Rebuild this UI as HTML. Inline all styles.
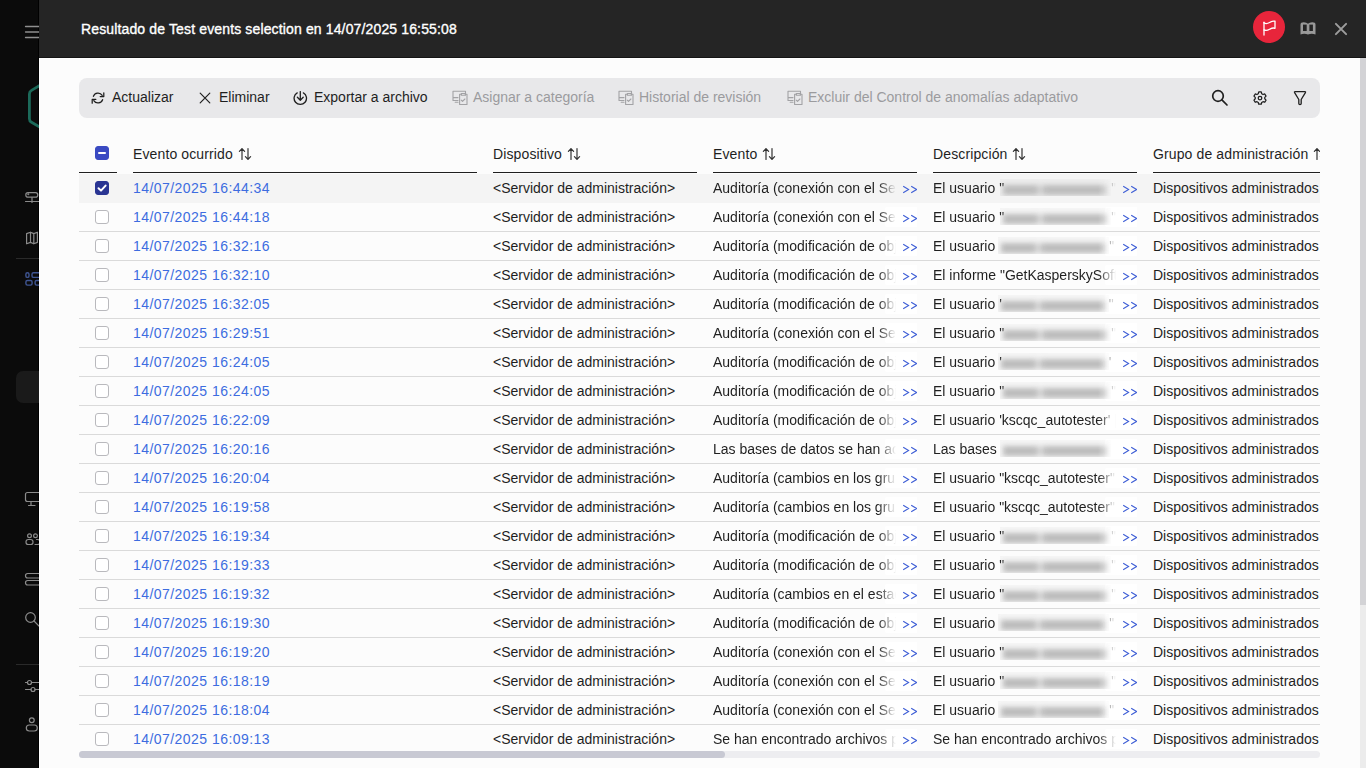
<!DOCTYPE html>
<html><head><meta charset="utf-8"><title>Resultado</title>
<style>
*{margin:0;padding:0;box-sizing:border-box}
html,body{width:1366px;height:768px;overflow:hidden;background:#0c0c0c;font-family:"Liberation Sans",sans-serif;font-size:14px;color:#1f1f1f}
.abs{position:absolute}
#side{position:absolute;left:0;top:0;width:39px;height:768px;background:#0b0b0b;border-right:1px solid #000}
#modal{position:absolute;left:39px;top:58px;width:1327px;height:710px;background:#fcfcfc;border-left:1px solid #fff;border-top:1px solid #fff}
#hdr{position:absolute;left:39px;top:0;width:1327px;height:58px;background:#252525;border-bottom:1px solid #151515}
#title{position:absolute;left:81px;top:20px;font-size:14px;font-weight:normal;color:#fff;letter-spacing:0.14px;-webkit-text-stroke:0.35px #fff;white-space:nowrap;line-height:18px}
#flag{position:absolute;left:1253px;top:11px;width:32px;height:32px;border-radius:50%;background:#e8253b}
#tb{position:absolute;left:79px;top:78px;width:1241px;height:40px;border-radius:8px;background:#e8e8ea}
.tbt{position:absolute;top:88px;line-height:18px;white-space:nowrap;color:#1f1f1f}
.dis{color:#9b9b9e}
.th{position:absolute;top:145px;height:20px;line-height:18px;white-space:nowrap;overflow:hidden;color:#1f1f1f;letter-spacing:0.12px}
.sort{display:inline-block;vertical-align:top;margin-left:5px;margin-top:2px}
.cb.hdr{position:absolute;background:#3a4ac2;border-color:#3a4ac2}
.minus{position:absolute;left:2px;top:5px;width:8px;height:2px;background:#fff;border-radius:1px}
.ul{position:absolute;top:172px;height:1px;background:#1f1f1f}
#vs{position:absolute;left:1360px;top:58px;width:6px;height:710px;background:#ececec}
#vsth{position:absolute;left:1360px;top:58px;width:6px;height:547px;background:#d3d3d6;border-radius:0}
#hs{position:absolute;z-index:5;left:79px;top:751px;width:1241px;height:7px;background:#ededf0;border-radius:3.5px}
#hsth{position:absolute;z-index:6;left:79px;top:751px;width:646px;height:7px;background:#c8c9d3;border-radius:3.5px}
#rows{position:absolute;left:0;top:0}
.row{position:absolute;left:79px;width:1241px;height:29px;border-bottom:1px solid #dadada;background:transparent}
.row.sel{background:#f4f4f4;border-bottom-color:#f4f4f4}
.row>div{position:absolute;top:0;height:28px;line-height:18px;padding-top:5px;white-space:nowrap;overflow:hidden}
.c0{left:0;width:38px}
.c1{left:54px;width:344px}
.c2{left:414px;width:204px}
.c3{left:634px;width:204px}
.c4{left:854px;width:204px}
.c5{left:1074px;width:167px}
.cb{position:absolute;left:16px;top:7px;width:14px;height:14px;border:1px solid #b9b9bd;border-radius:3px;background:#fff}
.cb.on{background:#2a3593;border-color:#2a3593}
.cb.on svg{position:absolute;left:-1px;top:-1px}
.link{color:#3d6ce0;letter-spacing:0.45px}
.txt{display:block;position:absolute;left:0;top:5px;width:183px;overflow:hidden;-webkit-mask-image:linear-gradient(to right,#000 165px,transparent 183px)}
.more{position:absolute;left:189px;top:11px}
.blur{display:inline-block;width:111px;height:19px;vertical-align:top;margin-top:-2px;margin-left:-4px;position:relative;overflow:hidden;background:rgba(0,0,0,0.03)}
.blur::before{content:"";position:absolute;left:3px;right:3px;top:8px;height:10px;background:linear-gradient(to right,#bcbcbc 0,#bcbcbc 33px,rgba(188,188,188,0.35) 37px,#bcbcbc 42px,#bcbcbc 100%);filter:blur(2.5px)}

.hl{position:absolute;left:172px;top:4px;width:33px;height:20px;background:#fff;border-radius:2px}
.row.sel .hl{display:none}
.blur.ns{margin-left:-1px}

</style></head>
<body>
<div id="side"></div>
<!-- sidebar icons -->
<svg class="abs" style="left:0;top:0" width="39" height="768" viewBox="0 0 39 768">
 <g stroke="#8f8f8f" stroke-width="1.3" fill="none" stroke-linecap="round">
  <path d="M25.5 26.5H40M25.5 32H40M25.5 37.5H40"/>
 </g>
 <path d="M41 84.8 L31.5 90.4 Q29.4 91.6 29.4 94 V118.7 Q29.4 121.1 31.5 122.3 L41 127.9" fill="none" stroke="#1c6a5a" stroke-width="2.8" stroke-linejoin="round"/>
 <g stroke="#8c8c8c" stroke-width="1.2" fill="none" stroke-linecap="round" stroke-linejoin="round">
  <rect x="25.8" y="192.7" width="12" height="4.4" rx="2.2"/><circle cx="28.3" cy="194.3" r="0.4" fill="#8c8c8c"/>
  <path d="M32 197.5V202.5M25.5 201.5H40"/>
  <path d="M26.6 233.6 L30.5 232.2 L33.8 233.6 L37.4 232.2 V242.4 L33.8 243.8 L30.5 242.4 L26.6 243.8Z M30.5 232.2V242.4 M33.8 233.6V243.8"/>
 </g>
 <path d="M16 258.5H39" stroke="#2a2a2a" stroke-width="1"/>
 <g stroke="#3f5592" stroke-width="1.4" fill="none">
  <rect x="25.9" y="272.8" width="3.1" height="4.6" rx="1.5"/>
  <rect x="32" y="272.8" width="8" height="4.6" rx="1.5"/>
  <rect x="25.9" y="280.5" width="6.2" height="4.6" rx="1.5"/>
  <rect x="35.1" y="280.5" width="5" height="4.6" rx="1.5"/>
 </g>
 <rect x="16" y="371" width="30" height="32" rx="7" fill="#1a1a1a"/>
 <g stroke="#8c8c8c" stroke-width="1.2" fill="none" stroke-linecap="round" stroke-linejoin="round">
  <rect x="25.5" y="492.5" width="15" height="9" rx="2"/>
  <path d="M31 502V505.5M28.5 505.5H35"/>
  <circle cx="29.5" cy="535.8" r="1.9"/><circle cx="35.5" cy="535.8" r="1.9"/>
  <rect x="26" y="539.5" width="7" height="5" rx="2.3"/><path d="M36.5 539.5h1a2.3 2.3 0 0 1 2.3 2.3v0.4a2.3 2.3 0 0 1 -2.3 2.3h-2.5"/>
  <rect x="25.5" y="573.5" width="15" height="4.5" rx="2.2"/>
  <rect x="25.5" y="580.5" width="15" height="4.5" rx="2.2"/>
  
  <circle cx="30.5" cy="617.5" r="4.8"/><path d="M34 621 L39 626"/>
 </g>
 <path d="M16 664.5H39" stroke="#2a2a2a" stroke-width="1"/>
 <g stroke="#8c8c8c" stroke-width="1.2" fill="none" stroke-linecap="round">
  <path d="M25.5 682.5H27.5M31.5 682.5H40M25.5 689.5H31M35 689.5H40"/>
  <circle cx="29.5" cy="682.5" r="2"/><circle cx="33" cy="689.5" r="2"/>
  <circle cx="31.8" cy="720.3" r="2.4"/>
  <rect x="26.3" y="725" width="11" height="6" rx="3"/>
 </g>
</svg>
<div id="modal"></div>
<div id="hdr"></div>
<div id="title">Resultado de Test events selection en 14/07/2025 16:55:08</div>
<div id="flag"><svg width="32" height="32" viewBox="0 0 32 32"><g fill="none" stroke="#fff" stroke-width="1.3" stroke-linecap="round" stroke-linejoin="round"><path d="M11 11.2V24"/><path d="M11 11.9Q13.4 13.4 16.6 11.5T22 10.2V17.3M11 18.9Q13.4 20.2 16.6 18.3T22 17.3"/></g></svg></div>
<svg class="abs" style="left:1300px;top:22px" width="16" height="13" viewBox="0 0 16 13">
 <path d="M0.5 12.5V2.6Q0.5 0.3 3.8 0.3Q6.6 0.3 8 1.8Q9.4 0.3 12.2 0.3Q15.5 0.3 15.5 2.6V12.5Q11.8 10.8 8 12.5Q4.2 10.8 0.5 12.5Z" fill="#999"/>
 <rect x="3" y="2.6" width="3.7" height="6.4" fill="#242424"/>
 <rect x="9.4" y="2.6" width="3.5" height="6.4" fill="#242424"/>
</svg>
<svg class="abs" style="left:1334px;top:22px" width="14" height="14" viewBox="0 0 14 14"><path d="M1.9 1.9L12.1 12.1M12.1 1.9L1.9 12.1" stroke="#9d9d9d" stroke-width="2" stroke-linecap="round"/></svg>
<div id="tb"></div>
<svg class="abs" style="left:91px;top:91px" width="14" height="14" viewBox="0 0 14 14"><g fill="none" stroke="#1f1f1f" stroke-width="1.25" stroke-linecap="round" stroke-linejoin="round"><path d="M2.4 5.3A4.9 4.9 0 0 1 11.2 4.4M12.8 1.8V5.6H9.2M11.6 8.7A4.9 4.9 0 0 1 2.8 9.6M1.2 12.2V8.4H4.8"/></g></svg>
<div class="tbt" style="left:112px">Actualizar</div>
<svg class="abs" style="left:199px;top:92px" width="12" height="12" viewBox="0 0 12 12"><path d="M1.2 1.2L10.8 10.8M10.8 1.2L1.2 10.8" stroke="#1f1f1f" stroke-width="1.2" stroke-linecap="round"/></svg>
<div class="tbt" style="left:219px">Eliminar</div>
<svg class="abs" style="left:293px;top:91px" width="15" height="15" viewBox="0 0 15 15"><g fill="none" stroke="#1f1f1f" stroke-width="1.3" stroke-linecap="round" stroke-linejoin="round"><path d="M4.2 1.9A6.2 6.2 0 1 0 10.4 1.9M7.3 0.6V9.1M4.4 6.3L7.3 9.2L10.2 6.3"/></g></svg>
<div class="tbt" style="left:314px">Exportar a archivo</div>
<svg class="abs" style="left:452px;top:90px" width="17" height="16" viewBox="0 0 17 16"><g fill="none" stroke="#a2a2a5" stroke-width="1.1" stroke-linecap="round" stroke-linejoin="round"><path d="M6 10.5H1V1.3H13.5V3.6M1 7.6H6M3.2 12.3H6"/><path d="M9.5 4.3H7.6V14.5H15V4.3H13.2M9.3 3.5H13.5V5.2H9.3Z"/><path d="M9.2 10.1L10.5 11.4L12.9 9"/></g></svg>
<div class="tbt dis" style="left:473px">Asignar a categoría</div>
<svg class="abs" style="left:618px;top:90px" width="17" height="16" viewBox="0 0 17 16"><g fill="none" stroke="#a2a2a5" stroke-width="1.1" stroke-linecap="round" stroke-linejoin="round"><path d="M6 10.5H1V1.3H13.5V3.6M1 7.6H6M3.2 12.3H6"/><path d="M9.5 4.3H7.6V14.5H15V4.3H13.2M9.3 3.5H13.5V5.2H9.3Z"/><path d="M9.2 10.1L10.5 11.4L12.9 9"/></g></svg>
<div class="tbt dis" style="left:639px">Historial de revisión</div>
<svg class="abs" style="left:787px;top:90px" width="17" height="16" viewBox="0 0 17 16"><g fill="none" stroke="#a2a2a5" stroke-width="1.1" stroke-linecap="round" stroke-linejoin="round"><path d="M6 10.5H1V1.3H13.5V3.6M1 7.6H6M3.2 12.3H6"/><path d="M9.5 4.3H7.6V14.5H15V4.3H13.2M9.3 3.5H13.5V5.2H9.3Z"/><path d="M9.2 10.1L10.5 11.4L12.9 9"/></g></svg>
<div class="tbt dis" style="left:808px">Excluir del Control de anomalías adaptativo</div>
<svg class="abs" style="left:1210px;top:89px" width="19" height="18" viewBox="0 0 19 18"><g fill="none" stroke="#1f1f1f" stroke-width="1.7" stroke-linecap="round"><circle cx="8" cy="7" r="5.3"/><path d="M11.9 10.9L17 16"/></g></svg>
<svg class="abs" style="left:1252px;top:90px" width="16" height="16" viewBox="0 0 16 16"><g fill="none" stroke="#1f1f1f" stroke-width="1.4" stroke-linejoin="round" transform="translate(8 8.1) scale(0.9) translate(-8 -8.1)"><path d="M6.6 1.3H9.4L9.9 3.2L11.4 4.1L13.3 3.5L14.7 5.9L13.3 7.3V8.9L14.7 10.3L13.3 12.7L11.4 12.1L9.9 13L9.4 14.9H6.6L6.1 13L4.6 12.1L2.7 12.7L1.3 10.3L2.7 8.9V7.3L1.3 5.9L2.7 3.5L4.6 4.1L6.1 3.2Z"/><circle cx="8" cy="8.1" r="2"/></g></svg>
<svg class="abs" style="left:1292px;top:90px" width="16" height="16" viewBox="0 0 16 16"><g fill="none" stroke="#1f1f1f" stroke-width="1.3" stroke-linejoin="round"><path d="M3.1 1.7H12.9Q13.9 1.7 13.4 2.6L9.2 9.5V13.5Q9.2 14.6 8 14.6Q6.8 14.6 6.8 13.5V9.5L2.6 2.6Q2.1 1.7 3.1 1.7Z"/></g></svg>
<div class="cb hdr" style="left:95px;top:146px"><div class="minus"></div></div>
<div class="th" style="left:133px;width:344px">Evento ocurrido<svg class="sort" width="14" height="14" viewBox="0 0 14 14"><g fill="none" stroke="#333" stroke-width="1.2" stroke-linecap="round" stroke-linejoin="round"><path d="M4 1.6V12.4M1.4 4.4L4 1.6L6.6 4.4M10 1.6V12.4M7.4 9.6L10 12.4L12.6 9.6"/></g></svg></div>
<div class="th" style="left:493px;width:204px">Dispositivo<svg class="sort" width="14" height="14" viewBox="0 0 14 14"><g fill="none" stroke="#333" stroke-width="1.2" stroke-linecap="round" stroke-linejoin="round"><path d="M4 1.6V12.4M1.4 4.4L4 1.6L6.6 4.4M10 1.6V12.4M7.4 9.6L10 12.4L12.6 9.6"/></g></svg></div>
<div class="th" style="left:713px;width:204px">Evento<svg class="sort" width="14" height="14" viewBox="0 0 14 14"><g fill="none" stroke="#333" stroke-width="1.2" stroke-linecap="round" stroke-linejoin="round"><path d="M4 1.6V12.4M1.4 4.4L4 1.6L6.6 4.4M10 1.6V12.4M7.4 9.6L10 12.4L12.6 9.6"/></g></svg></div>
<div class="th" style="left:933px;width:204px">Descripción<svg class="sort" width="14" height="14" viewBox="0 0 14 14"><g fill="none" stroke="#333" stroke-width="1.2" stroke-linecap="round" stroke-linejoin="round"><path d="M4 1.6V12.4M1.4 4.4L4 1.6L6.6 4.4M10 1.6V12.4M7.4 9.6L10 12.4L12.6 9.6"/></g></svg></div>
<div class="th" style="left:1153px;width:167px">Grupo de administración<svg class="sort" width="14" height="14" viewBox="0 0 14 14"><g fill="none" stroke="#333" stroke-width="1.2" stroke-linecap="round" stroke-linejoin="round"><path d="M4 1.6V12.4M1.4 4.4L4 1.6L6.6 4.4M10 1.6V12.4M7.4 9.6L10 12.4L12.6 9.6"/></g></svg></div>
<div class="ul" style="left:79px;width:38px"></div>
<div class="ul" style="left:133px;width:344px"></div>
<div class="ul" style="left:493px;width:204px"></div>
<div class="ul" style="left:713px;width:204px"></div>
<div class="ul" style="left:933px;width:204px"></div>
<div class="ul" style="left:1153px;width:167px"></div>
<div id="vs"></div><div id="vsth"></div>
<div id="hs"></div><div id="hsth"></div>

<div id="rows">
<div class="row sel" style="top:174px">
<div class="c0"><div class="cb on"><svg width="14" height="14" viewBox="0 0 14 14"><path d="M3.5 7.2 L6 9.6 L10.6 4.6" fill="none" stroke="#fff" stroke-width="2" stroke-linecap="round" stroke-linejoin="round"/></svg></div></div>
<div class="c1"><span class="link">14/07/2025 16:44:34</span></div>
<div class="c2">&lt;Servidor de administración&gt;</div>
<div class="c3"><span class="hl"></span><span class="txt">Auditoría (conexión con el Servidor de administración)</span><svg class="more" width="16" height="9" viewBox="0 0 16 9"><path d="M1.2 1.2L6.6 4.5L1.2 7.8M9.2 1.2L14.6 4.5L9.2 7.8" fill="none" stroke="#3f5fd6" stroke-width="1.1"/></svg></div>
<div class="c4"><span class="hl"></span><span class="txt">El usuario "<span class="blur"></span>"</span><svg class="more" width="16" height="9" viewBox="0 0 16 9"><path d="M1.2 1.2L6.6 4.5L1.2 7.8M9.2 1.2L14.6 4.5L9.2 7.8" fill="none" stroke="#3f5fd6" stroke-width="1.1"/></svg></div>
<div class="c5">Dispositivos administrados</div>
</div><div class="row" style="top:203px">
<div class="c0"><div class="cb"></div></div>
<div class="c1"><span class="link">14/07/2025 16:44:18</span></div>
<div class="c2">&lt;Servidor de administración&gt;</div>
<div class="c3"><span class="hl"></span><span class="txt">Auditoría (conexión con el Servidor de administración)</span><svg class="more" width="16" height="9" viewBox="0 0 16 9"><path d="M1.2 1.2L6.6 4.5L1.2 7.8M9.2 1.2L14.6 4.5L9.2 7.8" fill="none" stroke="#3f5fd6" stroke-width="1.1"/></svg></div>
<div class="c4"><span class="hl"></span><span class="txt">El usuario "<span class="blur"></span>"</span><svg class="more" width="16" height="9" viewBox="0 0 16 9"><path d="M1.2 1.2L6.6 4.5L1.2 7.8M9.2 1.2L14.6 4.5L9.2 7.8" fill="none" stroke="#3f5fd6" stroke-width="1.1"/></svg></div>
<div class="c5">Dispositivos administrados</div>
</div><div class="row" style="top:232px">
<div class="c0"><div class="cb"></div></div>
<div class="c1"><span class="link">14/07/2025 16:32:16</span></div>
<div class="c2">&lt;Servidor de administración&gt;</div>
<div class="c3"><span class="hl"></span><span class="txt">Auditoría (modificación de objetos)</span><svg class="more" width="16" height="9" viewBox="0 0 16 9"><path d="M1.2 1.2L6.6 4.5L1.2 7.8M9.2 1.2L14.6 4.5L9.2 7.8" fill="none" stroke="#3f5fd6" stroke-width="1.1"/></svg></div>
<div class="c4"><span class="hl"></span><span class="txt">El usuario <span class="blur ns"></span>"</span><svg class="more" width="16" height="9" viewBox="0 0 16 9"><path d="M1.2 1.2L6.6 4.5L1.2 7.8M9.2 1.2L14.6 4.5L9.2 7.8" fill="none" stroke="#3f5fd6" stroke-width="1.1"/></svg></div>
<div class="c5">Dispositivos administrados</div>
</div><div class="row" style="top:261px">
<div class="c0"><div class="cb"></div></div>
<div class="c1"><span class="link">14/07/2025 16:32:10</span></div>
<div class="c2">&lt;Servidor de administración&gt;</div>
<div class="c3"><span class="hl"></span><span class="txt">Auditoría (modificación de objetos)</span><svg class="more" width="16" height="9" viewBox="0 0 16 9"><path d="M1.2 1.2L6.6 4.5L1.2 7.8M9.2 1.2L14.6 4.5L9.2 7.8" fill="none" stroke="#3f5fd6" stroke-width="1.1"/></svg></div>
<div class="c4"><span class="hl"></span><span class="txt">El informe "GetKasperskySoftware"</span><svg class="more" width="16" height="9" viewBox="0 0 16 9"><path d="M1.2 1.2L6.6 4.5L1.2 7.8M9.2 1.2L14.6 4.5L9.2 7.8" fill="none" stroke="#3f5fd6" stroke-width="1.1"/></svg></div>
<div class="c5">Dispositivos administrados</div>
</div><div class="row" style="top:290px">
<div class="c0"><div class="cb"></div></div>
<div class="c1"><span class="link">14/07/2025 16:32:05</span></div>
<div class="c2">&lt;Servidor de administración&gt;</div>
<div class="c3"><span class="hl"></span><span class="txt">Auditoría (modificación de objetos)</span><svg class="more" width="16" height="9" viewBox="0 0 16 9"><path d="M1.2 1.2L6.6 4.5L1.2 7.8M9.2 1.2L14.6 4.5L9.2 7.8" fill="none" stroke="#3f5fd6" stroke-width="1.1"/></svg></div>
<div class="c4"><span class="hl"></span><span class="txt">El usuario '<span class="blur"></span>"</span><svg class="more" width="16" height="9" viewBox="0 0 16 9"><path d="M1.2 1.2L6.6 4.5L1.2 7.8M9.2 1.2L14.6 4.5L9.2 7.8" fill="none" stroke="#3f5fd6" stroke-width="1.1"/></svg></div>
<div class="c5">Dispositivos administrados</div>
</div><div class="row" style="top:319px">
<div class="c0"><div class="cb"></div></div>
<div class="c1"><span class="link">14/07/2025 16:29:51</span></div>
<div class="c2">&lt;Servidor de administración&gt;</div>
<div class="c3"><span class="hl"></span><span class="txt">Auditoría (conexión con el Servidor de administración)</span><svg class="more" width="16" height="9" viewBox="0 0 16 9"><path d="M1.2 1.2L6.6 4.5L1.2 7.8M9.2 1.2L14.6 4.5L9.2 7.8" fill="none" stroke="#3f5fd6" stroke-width="1.1"/></svg></div>
<div class="c4"><span class="hl"></span><span class="txt">El usuario "<span class="blur"></span>"</span><svg class="more" width="16" height="9" viewBox="0 0 16 9"><path d="M1.2 1.2L6.6 4.5L1.2 7.8M9.2 1.2L14.6 4.5L9.2 7.8" fill="none" stroke="#3f5fd6" stroke-width="1.1"/></svg></div>
<div class="c5">Dispositivos administrados</div>
</div><div class="row" style="top:348px">
<div class="c0"><div class="cb"></div></div>
<div class="c1"><span class="link">14/07/2025 16:24:05</span></div>
<div class="c2">&lt;Servidor de administración&gt;</div>
<div class="c3"><span class="hl"></span><span class="txt">Auditoría (modificación de objetos)</span><svg class="more" width="16" height="9" viewBox="0 0 16 9"><path d="M1.2 1.2L6.6 4.5L1.2 7.8M9.2 1.2L14.6 4.5L9.2 7.8" fill="none" stroke="#3f5fd6" stroke-width="1.1"/></svg></div>
<div class="c4"><span class="hl"></span><span class="txt">El usuario '<span class="blur"></span>' |</span><svg class="more" width="16" height="9" viewBox="0 0 16 9"><path d="M1.2 1.2L6.6 4.5L1.2 7.8M9.2 1.2L14.6 4.5L9.2 7.8" fill="none" stroke="#3f5fd6" stroke-width="1.1"/></svg></div>
<div class="c5">Dispositivos administrados</div>
</div><div class="row" style="top:377px">
<div class="c0"><div class="cb"></div></div>
<div class="c1"><span class="link">14/07/2025 16:24:05</span></div>
<div class="c2">&lt;Servidor de administración&gt;</div>
<div class="c3"><span class="hl"></span><span class="txt">Auditoría (modificación de objetos)</span><svg class="more" width="16" height="9" viewBox="0 0 16 9"><path d="M1.2 1.2L6.6 4.5L1.2 7.8M9.2 1.2L14.6 4.5L9.2 7.8" fill="none" stroke="#3f5fd6" stroke-width="1.1"/></svg></div>
<div class="c4"><span class="hl"></span><span class="txt">El usuario "<span class="blur"></span>"</span><svg class="more" width="16" height="9" viewBox="0 0 16 9"><path d="M1.2 1.2L6.6 4.5L1.2 7.8M9.2 1.2L14.6 4.5L9.2 7.8" fill="none" stroke="#3f5fd6" stroke-width="1.1"/></svg></div>
<div class="c5">Dispositivos administrados</div>
</div><div class="row" style="top:406px">
<div class="c0"><div class="cb"></div></div>
<div class="c1"><span class="link">14/07/2025 16:22:09</span></div>
<div class="c2">&lt;Servidor de administración&gt;</div>
<div class="c3"><span class="hl"></span><span class="txt">Auditoría (modificación de objetos)</span><svg class="more" width="16" height="9" viewBox="0 0 16 9"><path d="M1.2 1.2L6.6 4.5L1.2 7.8M9.2 1.2L14.6 4.5L9.2 7.8" fill="none" stroke="#3f5fd6" stroke-width="1.1"/></svg></div>
<div class="c4"><span class="hl"></span><span class="txt">El usuario 'kscqc_autotester' |</span><svg class="more" width="16" height="9" viewBox="0 0 16 9"><path d="M1.2 1.2L6.6 4.5L1.2 7.8M9.2 1.2L14.6 4.5L9.2 7.8" fill="none" stroke="#3f5fd6" stroke-width="1.1"/></svg></div>
<div class="c5">Dispositivos administrados</div>
</div><div class="row" style="top:435px">
<div class="c0"><div class="cb"></div></div>
<div class="c1"><span class="link">14/07/2025 16:20:16</span></div>
<div class="c2">&lt;Servidor de administración&gt;</div>
<div class="c3"><span class="hl"></span><span class="txt">Las bases de datos se han actualizado</span><svg class="more" width="16" height="9" viewBox="0 0 16 9"><path d="M1.2 1.2L6.6 4.5L1.2 7.8M9.2 1.2L14.6 4.5L9.2 7.8" fill="none" stroke="#3f5fd6" stroke-width="1.1"/></svg></div>
<div class="c4"><span class="hl"></span><span class="txt">Las bases <span class="blur ns"></span></span><svg class="more" width="16" height="9" viewBox="0 0 16 9"><path d="M1.2 1.2L6.6 4.5L1.2 7.8M9.2 1.2L14.6 4.5L9.2 7.8" fill="none" stroke="#3f5fd6" stroke-width="1.1"/></svg></div>
<div class="c5">Dispositivos administrados</div>
</div><div class="row" style="top:464px">
<div class="c0"><div class="cb"></div></div>
<div class="c1"><span class="link">14/07/2025 16:20:04</span></div>
<div class="c2">&lt;Servidor de administración&gt;</div>
<div class="c3"><span class="hl"></span><span class="txt">Auditoría (cambios en los grupos)</span><svg class="more" width="16" height="9" viewBox="0 0 16 9"><path d="M1.2 1.2L6.6 4.5L1.2 7.8M9.2 1.2L14.6 4.5L9.2 7.8" fill="none" stroke="#3f5fd6" stroke-width="1.1"/></svg></div>
<div class="c4"><span class="hl"></span><span class="txt">El usuario "kscqc_autotester"</span><svg class="more" width="16" height="9" viewBox="0 0 16 9"><path d="M1.2 1.2L6.6 4.5L1.2 7.8M9.2 1.2L14.6 4.5L9.2 7.8" fill="none" stroke="#3f5fd6" stroke-width="1.1"/></svg></div>
<div class="c5">Dispositivos administrados</div>
</div><div class="row" style="top:493px">
<div class="c0"><div class="cb"></div></div>
<div class="c1"><span class="link">14/07/2025 16:19:58</span></div>
<div class="c2">&lt;Servidor de administración&gt;</div>
<div class="c3"><span class="hl"></span><span class="txt">Auditoría (cambios en los grupos)</span><svg class="more" width="16" height="9" viewBox="0 0 16 9"><path d="M1.2 1.2L6.6 4.5L1.2 7.8M9.2 1.2L14.6 4.5L9.2 7.8" fill="none" stroke="#3f5fd6" stroke-width="1.1"/></svg></div>
<div class="c4"><span class="hl"></span><span class="txt">El usuario "kscqc_autotester"</span><svg class="more" width="16" height="9" viewBox="0 0 16 9"><path d="M1.2 1.2L6.6 4.5L1.2 7.8M9.2 1.2L14.6 4.5L9.2 7.8" fill="none" stroke="#3f5fd6" stroke-width="1.1"/></svg></div>
<div class="c5">Dispositivos administrados</div>
</div><div class="row" style="top:522px">
<div class="c0"><div class="cb"></div></div>
<div class="c1"><span class="link">14/07/2025 16:19:34</span></div>
<div class="c2">&lt;Servidor de administración&gt;</div>
<div class="c3"><span class="hl"></span><span class="txt">Auditoría (modificación de objetos)</span><svg class="more" width="16" height="9" viewBox="0 0 16 9"><path d="M1.2 1.2L6.6 4.5L1.2 7.8M9.2 1.2L14.6 4.5L9.2 7.8" fill="none" stroke="#3f5fd6" stroke-width="1.1"/></svg></div>
<div class="c4"><span class="hl"></span><span class="txt">El usuario "<span class="blur"></span>"</span><svg class="more" width="16" height="9" viewBox="0 0 16 9"><path d="M1.2 1.2L6.6 4.5L1.2 7.8M9.2 1.2L14.6 4.5L9.2 7.8" fill="none" stroke="#3f5fd6" stroke-width="1.1"/></svg></div>
<div class="c5">Dispositivos administrados</div>
</div><div class="row" style="top:551px">
<div class="c0"><div class="cb"></div></div>
<div class="c1"><span class="link">14/07/2025 16:19:33</span></div>
<div class="c2">&lt;Servidor de administración&gt;</div>
<div class="c3"><span class="hl"></span><span class="txt">Auditoría (modificación de objetos)</span><svg class="more" width="16" height="9" viewBox="0 0 16 9"><path d="M1.2 1.2L6.6 4.5L1.2 7.8M9.2 1.2L14.6 4.5L9.2 7.8" fill="none" stroke="#3f5fd6" stroke-width="1.1"/></svg></div>
<div class="c4"><span class="hl"></span><span class="txt">El usuario "<span class="blur"></span>"</span><svg class="more" width="16" height="9" viewBox="0 0 16 9"><path d="M1.2 1.2L6.6 4.5L1.2 7.8M9.2 1.2L14.6 4.5L9.2 7.8" fill="none" stroke="#3f5fd6" stroke-width="1.1"/></svg></div>
<div class="c5">Dispositivos administrados</div>
</div><div class="row" style="top:580px">
<div class="c0"><div class="cb"></div></div>
<div class="c1"><span class="link">14/07/2025 16:19:32</span></div>
<div class="c2">&lt;Servidor de administración&gt;</div>
<div class="c3"><span class="hl"></span><span class="txt">Auditoría (cambios en el estado)</span><svg class="more" width="16" height="9" viewBox="0 0 16 9"><path d="M1.2 1.2L6.6 4.5L1.2 7.8M9.2 1.2L14.6 4.5L9.2 7.8" fill="none" stroke="#3f5fd6" stroke-width="1.1"/></svg></div>
<div class="c4"><span class="hl"></span><span class="txt">El usuario "<span class="blur"></span>"</span><svg class="more" width="16" height="9" viewBox="0 0 16 9"><path d="M1.2 1.2L6.6 4.5L1.2 7.8M9.2 1.2L14.6 4.5L9.2 7.8" fill="none" stroke="#3f5fd6" stroke-width="1.1"/></svg></div>
<div class="c5">Dispositivos administrados</div>
</div><div class="row" style="top:609px">
<div class="c0"><div class="cb"></div></div>
<div class="c1"><span class="link">14/07/2025 16:19:30</span></div>
<div class="c2">&lt;Servidor de administración&gt;</div>
<div class="c3"><span class="hl"></span><span class="txt">Auditoría (modificación de objetos)</span><svg class="more" width="16" height="9" viewBox="0 0 16 9"><path d="M1.2 1.2L6.6 4.5L1.2 7.8M9.2 1.2L14.6 4.5L9.2 7.8" fill="none" stroke="#3f5fd6" stroke-width="1.1"/></svg></div>
<div class="c4"><span class="hl"></span><span class="txt">El usuario <span class="blur ns"></span>"</span><svg class="more" width="16" height="9" viewBox="0 0 16 9"><path d="M1.2 1.2L6.6 4.5L1.2 7.8M9.2 1.2L14.6 4.5L9.2 7.8" fill="none" stroke="#3f5fd6" stroke-width="1.1"/></svg></div>
<div class="c5">Dispositivos administrados</div>
</div><div class="row" style="top:638px">
<div class="c0"><div class="cb"></div></div>
<div class="c1"><span class="link">14/07/2025 16:19:20</span></div>
<div class="c2">&lt;Servidor de administración&gt;</div>
<div class="c3"><span class="hl"></span><span class="txt">Auditoría (conexión con el Servidor de administración)</span><svg class="more" width="16" height="9" viewBox="0 0 16 9"><path d="M1.2 1.2L6.6 4.5L1.2 7.8M9.2 1.2L14.6 4.5L9.2 7.8" fill="none" stroke="#3f5fd6" stroke-width="1.1"/></svg></div>
<div class="c4"><span class="hl"></span><span class="txt">El usuario "<span class="blur"></span>"</span><svg class="more" width="16" height="9" viewBox="0 0 16 9"><path d="M1.2 1.2L6.6 4.5L1.2 7.8M9.2 1.2L14.6 4.5L9.2 7.8" fill="none" stroke="#3f5fd6" stroke-width="1.1"/></svg></div>
<div class="c5">Dispositivos administrados</div>
</div><div class="row" style="top:667px">
<div class="c0"><div class="cb"></div></div>
<div class="c1"><span class="link">14/07/2025 16:18:19</span></div>
<div class="c2">&lt;Servidor de administración&gt;</div>
<div class="c3"><span class="hl"></span><span class="txt">Auditoría (conexión con el Servidor de administración)</span><svg class="more" width="16" height="9" viewBox="0 0 16 9"><path d="M1.2 1.2L6.6 4.5L1.2 7.8M9.2 1.2L14.6 4.5L9.2 7.8" fill="none" stroke="#3f5fd6" stroke-width="1.1"/></svg></div>
<div class="c4"><span class="hl"></span><span class="txt">El usuario "<span class="blur"></span>"</span><svg class="more" width="16" height="9" viewBox="0 0 16 9"><path d="M1.2 1.2L6.6 4.5L1.2 7.8M9.2 1.2L14.6 4.5L9.2 7.8" fill="none" stroke="#3f5fd6" stroke-width="1.1"/></svg></div>
<div class="c5">Dispositivos administrados</div>
</div><div class="row" style="top:696px">
<div class="c0"><div class="cb"></div></div>
<div class="c1"><span class="link">14/07/2025 16:18:04</span></div>
<div class="c2">&lt;Servidor de administración&gt;</div>
<div class="c3"><span class="hl"></span><span class="txt">Auditoría (conexión con el Servidor de administración)</span><svg class="more" width="16" height="9" viewBox="0 0 16 9"><path d="M1.2 1.2L6.6 4.5L1.2 7.8M9.2 1.2L14.6 4.5L9.2 7.8" fill="none" stroke="#3f5fd6" stroke-width="1.1"/></svg></div>
<div class="c4"><span class="hl"></span><span class="txt">El usuario <span class="blur ns"></span>"</span><svg class="more" width="16" height="9" viewBox="0 0 16 9"><path d="M1.2 1.2L6.6 4.5L1.2 7.8M9.2 1.2L14.6 4.5L9.2 7.8" fill="none" stroke="#3f5fd6" stroke-width="1.1"/></svg></div>
<div class="c5">Dispositivos administrados</div>
</div><div class="row" style="top:725px">
<div class="c0"><div class="cb"></div></div>
<div class="c1"><span class="link">14/07/2025 16:09:13</span></div>
<div class="c2">&lt;Servidor de administración&gt;</div>
<div class="c3"><span class="hl"></span><span class="txt">Se han encontrado archivos para procesar</span><svg class="more" width="16" height="9" viewBox="0 0 16 9"><path d="M1.2 1.2L6.6 4.5L1.2 7.8M9.2 1.2L14.6 4.5L9.2 7.8" fill="none" stroke="#3f5fd6" stroke-width="1.1"/></svg></div>
<div class="c4"><span class="hl"></span><span class="txt">Se han encontrado archivos para procesar</span><svg class="more" width="16" height="9" viewBox="0 0 16 9"><path d="M1.2 1.2L6.6 4.5L1.2 7.8M9.2 1.2L14.6 4.5L9.2 7.8" fill="none" stroke="#3f5fd6" stroke-width="1.1"/></svg></div>
<div class="c5">Dispositivos administrados</div>
</div>
</div>
</body></html>
